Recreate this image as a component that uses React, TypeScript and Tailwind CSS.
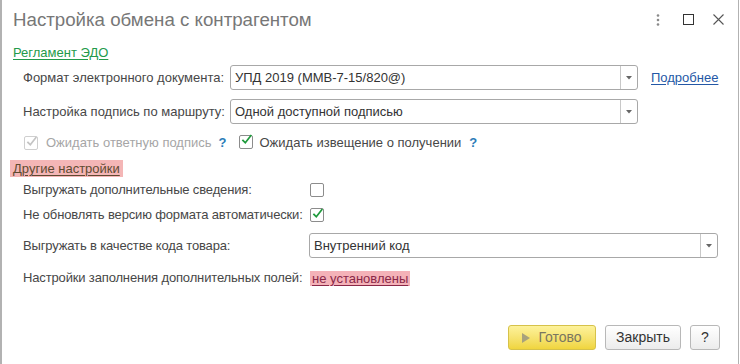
import React from 'react';

function Check({ checked, disabled }: { checked?: boolean; disabled?: boolean }) {
    return (
        <span
            className={`inline-flex w-[14px] h-[14px] shrink-0 rounded-[2px] border bg-white items-center justify-center ${disabled ? 'border-[#cfcfcf]' : 'border-[#8c8c8c]'}`}
        >
            {checked && (
                <svg width="14" height="14" viewBox="0 0 14 14" className="-mt-[3px] ml-[1px]">
                    <path
                        d="M2.5 7.5 L5.5 10.5 L12.5 1.5"
                        fill="none"
                        stroke={disabled ? '#c4c4c4' : '#1f9a3c'}
                        strokeWidth="2.2"
                        strokeLinecap="square"
                    />
                </svg>
            )}
        </span>
    );
}

function Select({ value, width }: { value: string; width: string }) {
    return (
        <div className={`${width} h-[25px] flex items-stretch border border-[#a8a8a8] rounded-[3px] bg-white`}>
            <div className="flex-1 flex items-center pl-[4px] text-[#333]">{value}</div>
            <div className="w-[17px] border-l border-[#c8c8c8] flex items-center justify-center">
                <svg width="6" height="4" viewBox="0 0 6 4">
                    <path d="M0 0 L6 0 L3 3.5 Z" fill="#666" />
                </svg>
            </div>
        </div>
    );
}

export default function App() {
    return (
        <div className="w-[740px] h-[364px] bg-white font-['Liberation_Sans',Arial,sans-serif] text-[13px] text-[#474747]">
            <div className="w-[739px] h-full flex flex-col border-l-2 border-r border-[#b2b2b2]">
                {/* header */}
                <div className="flex items-center h-[26px] mt-[7px] pl-[11px] pr-[5px]">
                    <div className="text-[18.7px] leading-[26px] text-[#777]">Настройка обмена с контрагентом</div>
                    <div className="ml-auto flex">
                        <div className="w-[30px] flex justify-center">
                            <svg width="4" height="12" viewBox="0 0 4 12">
                                <circle cx="2" cy="1.5" r="1.3" fill="#8a8a8a" />
                                <circle cx="2" cy="6" r="1.3" fill="#8a8a8a" />
                                <circle cx="2" cy="10.5" r="1.3" fill="#8a8a8a" />
                            </svg>
                        </div>
                        <div className="w-[30px] flex justify-center">
                            <svg width="11" height="11" viewBox="0 0 11 11">
                                <rect x="0.5" y="0.5" width="10" height="10" fill="none" stroke="#333" strokeWidth="1" />
                            </svg>
                        </div>
                        <div className="w-[30px] flex justify-center">
                            <svg width="11" height="11" viewBox="0 0 11 11">
                                <path d="M0.5 0.5 L10.5 10.5 M10.5 0.5 L0.5 10.5" stroke="#555" strokeWidth="1.1" />
                            </svg>
                        </div>
                    </div>
                </div>

                <div className="pl-[11px] flex flex-col flex-1">
                    <div className="mt-[12px] h-[16px] leading-[16px]">
                        <span className="text-[#239a4a] underline underline-offset-2">Регламент ЭДО</span>
                    </div>

                    <div className="pl-[10px] mt-[4px] flex items-center">
                        <div className="w-[207px]">Формат электронного документа:</div>
                        <Select value="УПД 2019 (ММВ-7-15/820@)" width="w-[408px]" />
                        <span className="ml-[13px] text-[#2458a6] underline underline-offset-2">Подробнее</span>
                    </div>

                    <div className="pl-[10px] mt-[9px] flex items-center">
                        <div className="w-[207px]">Настройка подпись по маршруту:</div>
                        <Select value="Одной доступной подписью" width="w-[408px]" />
                    </div>

                    <div className="pl-[11px] mt-[11px] h-[16px] flex items-center">
                        <Check checked disabled />
                        <span className="ml-[8px] text-[#a6a6a6]">Ожидать ответную подпись</span>
                        <span className="ml-[7px] font-bold text-[#2b7cb8]">?</span>
                        <span className="ml-[12px]"><Check checked /></span>
                        <span className="ml-[7px]">Ожидать извещение о получении</span>
                        <span className="ml-[8px] font-bold text-[#2b7cb8]">?</span>
                    </div>

                    <div className="mt-[9px] h-[17px] flex">
                        <span className="-ml-[3px] px-[3px] bg-[#f4b6b6] leading-[17px] text-[#5e4a30] underline underline-offset-2">
                            Другие настройки
                        </span>
                    </div>

                    <div className="pl-[10px] mt-[5px] h-[16px] flex items-center">
                        <div className="w-[287px] whitespace-nowrap tracking-[-0.15px]">Выгружать дополнительные сведения:</div>
                        <Check />
                    </div>

                    <div className="pl-[10px] mt-[9px] h-[16px] flex items-center">
                        <div className="w-[287px] whitespace-nowrap tracking-[-0.15px]">Не обновлять версию формата автоматически:</div>
                        <Check checked />
                    </div>

                    <div className="pl-[10px] mt-[10px] flex items-center">
                        <div className="w-[286px] tracking-[-0.15px]">Выгружать в качестве кода товара:</div>
                        <Select value="Внутренний код" width="w-[409px]" />
                    </div>

                    <div className="pl-[10px] mt-[12px] h-[16px] flex items-center">
                        <div className="w-[287px] whitespace-nowrap tracking-[-0.15px]">Настройки заполнения дополнительных полей:</div>
                        <span className="px-[2px] bg-[#f4b2b8] leading-[15px] text-[#8a2848] underline underline-offset-2">
                            не установлены
                        </span>
                    </div>

                    <div className="mt-auto mb-[14px] flex justify-end pr-[18px] gap-[9px]">
                        <button className="w-[88px] h-[25px] flex items-center justify-center gap-[8px] rounded-[3px] border border-[#d6c24a] bg-gradient-to-b from-[#fdf29a] to-[#f0d53c] text-[#7a7660]">
                            <svg width="8" height="10" viewBox="0 0 8 10">
                                <path d="M0 0 L8 5 L0 10 Z" fill="#a8a27c" />
                            </svg>
                            <span className="text-[14px]">Готово</span>
                        </button>
                        <button className="w-[76px] h-[25px] flex items-center justify-center rounded-[3px] border border-[#b8b8b8] bg-gradient-to-b from-white to-[#ececec] text-[14px] text-[#333]">
                            Закрыть
                        </button>
                        <button className="w-[30px] h-[25px] flex items-center justify-center rounded-[3px] border border-[#b8b8b8] bg-gradient-to-b from-white to-[#ececec] text-[14px] text-[#333]">
                            ?
                        </button>
                    </div>
                </div>
            </div>
        </div>
    );
}
